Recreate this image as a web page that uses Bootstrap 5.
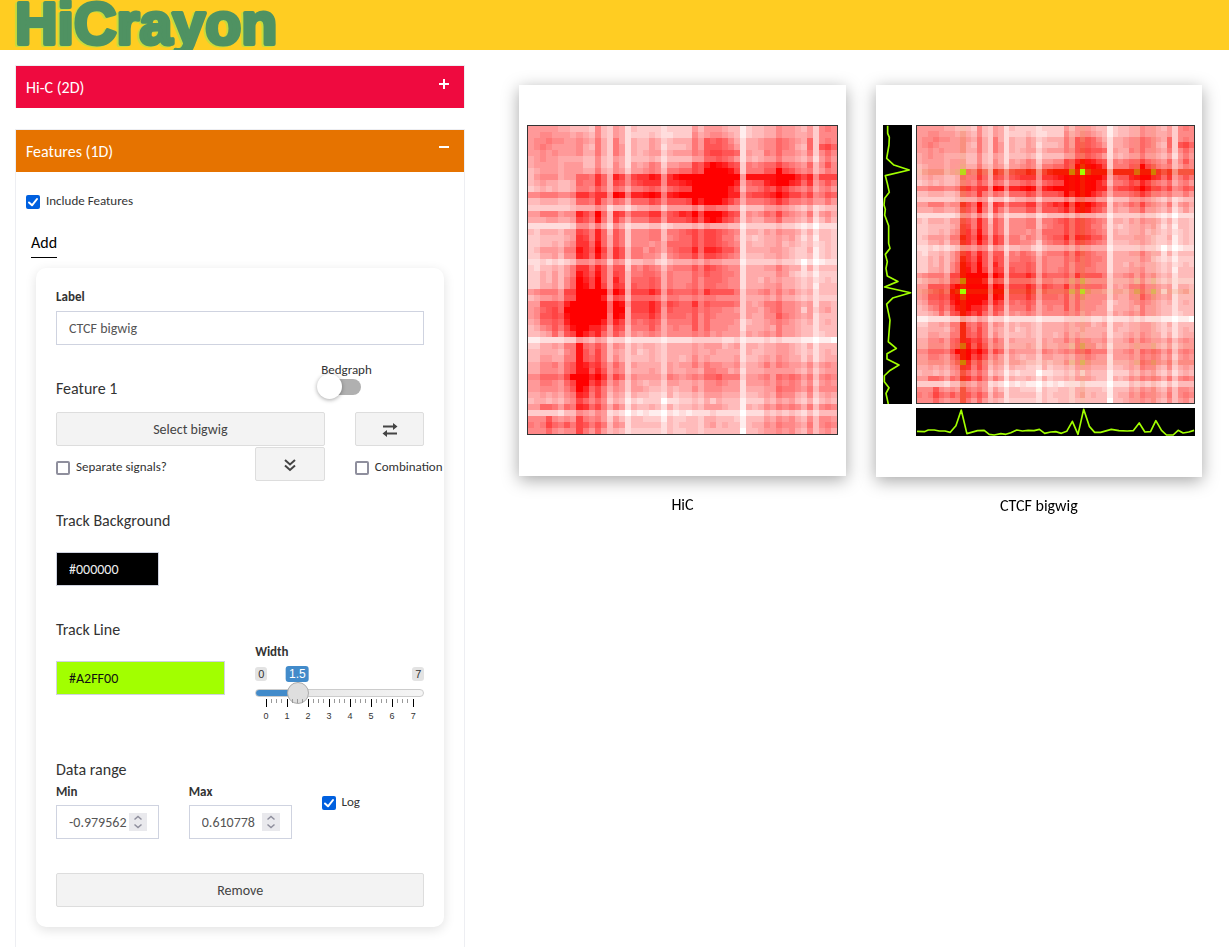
<!DOCTYPE html>
<html lang="en">
<head>
<meta charset="utf-8">
<meta name="viewport" content="width=device-width, initial-scale=1">
<title>HiCrayon</title>
<link rel="stylesheet" href="https://cdn.jsdelivr.net/npm/bootstrap@5.3.0/dist/css/bootstrap.min.css">
<style>
  body { font-family: Carlito, Lato, sans-serif; font-size: 13px; line-height: 18px; color: #333; background: #fff; }
  .topbar { background: #ffcd22; height: 50px; overflow: hidden; }
  .logo { display: block; width: 290px; height: 50px; filter: drop-shadow(-2px 1px 0 #c6db3c); }
  .logo text { font: bold 59px "Liberation Sans", sans-serif; fill: #4f9262; stroke: #4f9262; stroke-width: 4px; stroke-linejoin: round; }
  .side { flex: 0 0 calc(39% + 1px); padding: 15px; }
  .views { padding: 35px 12px 0 24px; }
  .g30 { --bs-gutter-x: 30px; }

  .panel-box { border: 1px solid #edeef2; border-bottom-width: 0; margin-bottom: 21px; }
  .panel-head { display: flex; justify-content: space-between; width: 100%; height: 42px; border: 0; padding: 11px 15px 9px 10px; color: #fff; font-size: 16px; line-height: 22px; text-align: left; }
  .panel-head svg { width: 10px; height: 14px; }
  .head-red { background: #ef0a3f; }
  .head-orange { background: #e67300; }
  .panel-content { padding: 20px; }

  .tick { display: flex; align-items: center; gap: 6px; white-space: nowrap; }
  .tick input { appearance: none; flex: none; width: 14px; height: 14px; margin: 2px 0 0; border: 2px solid #8f8f9d; border-radius: 2px; background: #fff; }
  .tick input:checked { border: 0; background: #0060df url("data:image/svg+xml,%3Csvg xmlns='http://www.w3.org/2000/svg' viewBox='0 0 14 14'%3E%3Cpath d='M3 7.5 6 10.3 11 4' fill='none' stroke='white' stroke-width='2' stroke-linecap='round' stroke-linejoin='round'/%3E%3C/svg%3E"); }
  .include { margin-left: -10px; }
  .tabs { margin: 22px 0 10px -5px; }
  .tab-link { color: #000; font-size: 16px; line-height: 22px; text-decoration: none; border-bottom: 1px solid #000; padding-bottom: 3px; display: inline-block; }

  .feature { background: #fff; border-radius: 10px; padding: 20px; box-shadow: 0 3px 12px rgba(0,0,0,.12); }
  .feature h2 { font-size: 16px; line-height: 22px; font-weight: 400; margin: 0; }
  .lab { display: block; font-weight: 700; line-height: 18px; }
  .field { display: block; width: 100%; height: 34px; border: 1px solid #cfd3e0; padding: 6px 12px; font-size: 14px; line-height: 20px; color: #555; background: #fff; outline: 0; }
  .field[type=number] { appearance: textfield; padding-right: 0; }
  .field::-webkit-inner-spin-button { display: none; }
  .under { margin-top: 5px; }
  .field-black { background: #000; color: #eee; }
  .field-lime { background: #a2ff00; color: #111; }
  .spin { position: absolute; right: 12px; top: 8px; width: 18px; height: 18px; background: #e9e9ed; }
  .plain-btn { display: block; width: 100%; height: 34px; border: 1px solid #ddd; border-radius: 2px; background: #f3f3f3; color: #444; font-size: 14px; line-height: 20px; padding: 1px 0 0; }
  .plain-btn svg { display: block; margin: auto; }

  .switch-row { margin-top: 16px; }
  .switch-row h2 { padding-top: 17px; }
  .switch-col { padding-left: 81px; }
  .switch-col input { appearance: none; display: block; width: 39px; height: 16px; margin: 0 0 17px 1px; border-radius: 8px; background: #b0b0b0; position: relative; }
  .switch-col input::before { content: ""; position: absolute; left: -5px; top: -5px; width: 25px; height: 25px; border-radius: 50%; background: #fff; box-shadow: 0 1px 4px rgba(0,0,0,.35); }
  .pick-row { margin-top: 1px; }
  .drop { margin-top: 11px; }
  .feature .bg-title { margin: 29px 0 20px; }
  .feature .line-title { margin-top: 33px; }
  .line-row { margin-top: 2px; }
  .line-row .field { margin-top: 18px; }
  .feature .range-title { margin-top: 30px; }
  .range-row { margin-top: 2px; }
  .range-row .lab { margin-bottom: 4px; }
  .log { margin-top: 10px; }
  .remove { margin-top: 34px; }

  .slide-labels { position: relative; display: flex; justify-content: space-between; height: 16px; margin-top: 5px; font: 11px/14px "Liberation Sans", sans-serif; }
  .slide-labels span { background: #e3e3e3; border-radius: 3px; padding: 0 3px; height: 14px; margin-top: 1px; }
  .slide-labels output { position: absolute; left: 25%; transform: translateX(-50%); background: #428bca; color: #fff; border-radius: 3px; padding: 1px 3px; font-size: 12px; }
  .slide { appearance: none; display: block; width: 100%; height: 22px; margin: 0; background: none; }
  .slide::-webkit-slider-runnable-track { height: 8px; border-radius: 4px; border: 1px solid #ccc; background: linear-gradient(90deg, #428bca 25%, #e6e6e6 25%, #f5f5f5); }
  .slide::-webkit-slider-thumb { appearance: none; width: 22px; height: 22px; margin-top: -8px; border-radius: 50%; background: #dedede; border: 1px solid #ababab; }
  .scale { display: block; width: calc(100% - 22px); height: 30px; margin: -5px 11px 0; overflow: visible; font: 9px "Liberation Sans", sans-serif; fill: #333; }

  .view-card { background: #fff; box-shadow: 0 4px 16px rgba(0,0,0,.35); padding: 40px 8px 41px; }
  .view-name { font-size: 16px; line-height: 22px; color: #000; text-align: center; margin-top: 18px; }
  .heat { display: block; width: 100%; aspect-ratio: 1; border: 1px solid #333; image-rendering: pixelated; }
  .tracks { display: grid; grid-template-columns: 9fr 87fr; grid-template-rows: auto 28px; gap: 4px; margin: 0 -1px; }
  .tracks svg { display: block; width: 100%; height: 100%; background: #000; }
  .side-track { position: relative; }
  .side-track svg { position: absolute; }
  .tracks polyline { fill: none; stroke: #a2ff00; stroke-width: 5; stroke-linejoin: round; }
</style>
</head>
<body>
<header class="topbar">
  <svg class="logo" role="img" aria-label="HiCrayon"><text x="15" y="44">HiCrayon</text></svg>
</header>
<div class="d-flex">
  <aside class="side">
    <section class="panel-box">
      <button class="panel-head head-red" type="button">Hi-C (2D)
        <svg viewBox="0 0 10 14"><path d="M0 7h10M5 2v10" stroke="#fff" stroke-width="2"/></svg></button>
    </section>
    <section class="panel-box">
      <button class="panel-head head-orange" type="button">Features (1D)
        <svg viewBox="0 0 10 14"><path d="M0 6h10" stroke="#fff" stroke-width="2"/></svg></button>
      <div class="panel-content">
        <label class="tick include"><input type="checkbox" checked><span>Include Features</span></label>
        <nav class="tabs"><a class="tab-link" href="#add">Add</a></nav>
        <form class="feature" id="add">
          <label class="lab" for="lbl">Label</label>
          <input class="field under" id="lbl" value="CTCF bigwig">
          <div class="row g30 switch-row">
            <div class="col-6"><h2>Feature 1</h2></div>
            <div class="col-6 switch-col"><label for="bed">Bedgraph</label><input id="bed" type="checkbox"></div>
          </div>
          <div class="row g30">
            <div class="col-9"><button class="plain-btn" type="button">Select bigwig</button></div>
            <div class="col-3"><button class="plain-btn" type="button" aria-label="Swap">
              <svg width="16" height="16" viewBox="0 0 16 16"><path d="M1 4.500h11M4 11.500h11" stroke="#444" stroke-width="2"/><path d="M11 1l4.500 3.500L11 8zM5 8 .5 11.500 5 15z" fill="#444"/></svg></button></div>
          </div>
          <div class="row g30 pick-row">
            <div class="col-6"><label class="tick drop"><input type="checkbox"><span>Separate signals?</span></label></div>
            <div class="col-3"><button class="plain-btn" type="button" aria-label="More">
              <svg width="12" height="14" viewBox="0 0 12 14"><path d="M1 2l5 4.500L11 2M1 7.500 6 12l5-4.500" fill="none" stroke="#444" stroke-width="2"/></svg></button></div>
            <div class="col-3"><label class="tick drop"><input type="checkbox"><span>Combination</span></label></div>
          </div>
          <h2 class="bg-title">Track Background</h2>
          <div class="row g30"><div class="col-4"><input class="field field-black" aria-label="Track background colour" value="#000000"></div></div>
          <h2 class="line-title">Track Line</h2>
          <div class="row g30 line-row">
            <div class="col-6"><input class="field field-lime" aria-label="Track line colour" value="#A2FF00"></div>
            <div class="col-6">
              <label class="lab" for="wid">Width</label>
              <div class="slide-labels"><span>0</span><output for="wid">1.5</output><span>7</span></div>
              <input class="slide" id="wid" type="range" min="0" max="7" step="0.1" value="1.5">
              <svg class="scale" id="scale" aria-hidden="true"></svg>
            </div>
          </div>
          <h2 class="range-title">Data range</h2>
          <div class="row g30 range-row">
            <div class="col-4"><label class="lab" for="mn">Min</label>
              <div class="position-relative"><input class="field" id="mn" type="number" step="any" value="-0.979562">
                <svg class="spin" viewBox="0 0 18 18"><path d="M5.500 6.500 9 3.500l3.500 3M5.500 11.500l3.500 3 3.500-3" fill="none" stroke="#8f8f9d" stroke-width="1.500"/></svg></div></div>
            <div class="col-4"><label class="lab" for="mx">Max</label>
              <div class="position-relative"><input class="field" id="mx" type="number" step="any" value="0.610778">
                <svg class="spin" viewBox="0 0 18 18"><path d="M5.500 6.500 9 3.500l3.500 3M5.500 11.500l3.500 3 3.500-3" fill="none" stroke="#8f8f9d" stroke-width="1.500"/></svg></div></div>
            <div class="col-4"><label class="tick log"><input type="checkbox" checked><span>Log</span></label></div>
          </div>
          <button class="plain-btn remove" type="button">Remove</button>
        </form>
      </div>
    </section>
  </aside>
  <main class="views flex-grow-1">
    <div class="row g30 mx-0">
      <figure class="col-6 m-0">
        <div class="view-card"><canvas class="heat" id="hic" width="51" height="51"></canvas></div>
        <figcaption class="view-name">HiC</figcaption>
      </figure>
      <figure class="col-6 m-0">
        <div class="view-card pb-40"><div class="tracks">
          <div class="side-track"><svg viewBox="39 150 87 838" preserveAspectRatio="none"><polyline points="53,152 53,175 58,187 57,210 50,250 72,270 118,285 46,302 52,325 58,352 44,370 42,390 46,403 44,420 56,452 56,505 60,520 46,538 52,560 48,580 52,603 84,619 44,636 122,653 68,669 50,687 60,735 55,800 79,820 51,836 51,852 87,870 60,886 43,902 43,920 57,938 48,955 55,987"/></svg></div>
          <canvas class="heat" id="mix" width="51" height="51"></canvas>
          <div></div>
          <div><svg viewBox="135 432 840 84" preserveAspectRatio="none"><polyline points="138,502 160,503 172,498 190,498 205,501 222,501 238,505 255,485 271,438 288,509 320,500 340,499 355,511 370,513 390,509 405,511 420,506 438,498 455,501 472,499 490,500 506,496 522,508 540,504 555,503 572,508 588,502 605,472 622,511 639,436 656,487 672,505 690,505 722,496 745,500 770,501 788,500 806,477 823,504 840,503 856,470 873,499 888,513 908,513 923,499 938,507 955,504 971,499"/></svg></div>
        </div></div>
        <figcaption class="view-name">CTCF bigwig</figcaption>
      </figure>
    </div>
  </main>
</div>
<script src="https://cdn.jsdelivr.net/npm/bootstrap@5.3.0/dist/js/bootstrap.bundle.min.js"></script>
<script>
  // Contact matrix, upper triangle: row i starts at column i, one hex digit per bin.
  const rows = [
    "666665544437436524333323333646665441344557665463787",
    "67766656547436523334322333756776541344557665563777",
    "7877667658538525446534555 86a9a9752556779876593787".replace(" ", ""),
    "766667548538625446524445 86aaa9862556779875493ab9".replace(" ", ""),
    "76667558538625456635666 87abbaa92655879776583797".replace(" ", ""),
    "5555447436524445424444 6699a9862545668665462686".replace(" ", ""),
    "666447437526568736677badfedba387899b9876947a7",
    "66558547636678748899baffffeb3888aafba8784687",
    "998c95db7bcced7ceffffffffff6eeeeefffdbd7bbb",
    "88c95ba7abccc7ccdefffffffd59aadeffdc9c68a8",
    "7a85985889a969abbffffffdb4889badb98795786",
    "cc7fe8ddefe8defffffffffdd6abbcdfdbb9b78a9".replace("fffffffff", "ffffffff"),
    "86985999ba7aaabfdfffdb958889aca88786686",
    "24424556636666869988662444667654352344",
    "cb7aaacc7abdcfbfffdba376798b876583675",
    "85888aa6aaabdaefeba83655779665462464",
    "23334423444546555441333334332120222",
    "777884889ab9bba9872554657665352443",
    "778847899b9bba8862434556564241443",
    "76759999b9bba9872544556454342343",
    "87589aad9ddcaa82555566543351343",
    "637899b8bba9872444556543341343",
    "24555657665551333334332020122",
    "7888a8ba98772555668655252444",
    "77798a998872555557643231333",
    "77979998772554656554342343",
    "8979988772555667554341444",
    "a8caaaa83667868675452444",
    "78877773555657554342333",
    "a999983656889776562554",
    "887763665789776363564",
    "7777365577a876562444",
    "7762455678765452454",
    "662555658665442444",
    "63656768665442344",
    "1222323222110110",
    "554556654352444",
    "44556654342454",
    "5657655352455",
    "868766574676",
    "66665463566", "9898684787", "787573676", "87684777", "5473565",
    "352454", "84787", "2444", "776", "87", "5"
  ];
  const size = 51;
  // Short rows are read from their right end, where the last bin is.
  const level = (r, c) => {
    const row = rows[Math.min(r, c)];
    const at = row.length - size + Math.max(r, c);
    return parseInt(row[Math.max(0, at)], 16) / 15;
  };
  const signal = Array(size).fill(0.1);
  Object.assign(signal, { 7: 0.2, 8: 1, 28: 0.5, 29: 0.15, 30: 1, 31: 0.25, 40: 0.4, 43: 0.5 });

  function paint(id, withSignal) {
    const ctx = document.getElementById(id).getContext("2d");
    for (let r = 0; r < size; r++) for (let c = 0; c < size; c++) {
      const l = level(r, c);
      const v = Math.round(255 * (1 - l));
      const m = withSignal ? signal[r] * signal[c] * (0.4 + 0.6 * l) : 0;
      ctx.fillStyle = `rgb(${255 - 93 * m}, ${v + (255 - v) * m}, ${v * (1 - m)})`;
      ctx.fillRect(c, r, 1, 1);
    }
  }
  paint("hic", false);
  paint("mix", true);

  // Slider scale: four steps to each unit.
  let marks = "";
  for (let k = 0; k <= 28; k++) {
    const x = k / 28 * 100 + "%", whole = k % 4 === 0;
    marks += `<line x1="${x}" x2="${x}" y1="0" y2="${whole ? 8 : 4}" stroke="${whole ? "#000" : "#999"}" shape-rendering="crispEdges"/>`;
    if (whole) marks += `<text x="${x}" y="20" text-anchor="middle">${k / 4}</text>`;
  }
  document.getElementById("scale").innerHTML = marks;
</script>
</body>
</html>
